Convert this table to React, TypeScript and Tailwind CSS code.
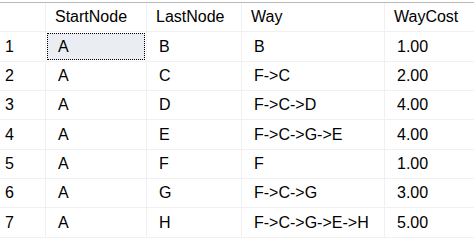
const columns = ['StartNode', 'LastNode', 'Way', 'WayCost'];

const rows = [
  ['A', 'B', 'B', '1.00'],
  ['A', 'C', 'F->C', '2.00'],
  ['A', 'D', 'F->C->D', '4.00'],
  ['A', 'E', 'F->C->G->E', '4.00'],
  ['A', 'F', 'F', '1.00'],
  ['A', 'G', 'F->C->G', '3.00'],
  ['A', 'H', 'F->C->G->E->H', '5.00'],
];

// alternating heights so the grid lines land where the screenshot has them
const rowHeights = ['h-[30px]', 'h-[29px]', 'h-[29px]', 'h-[30px]', 'h-[29px]', 'h-[29px]', 'h-[30px]'];

const colWidths = ['w-[46px]', 'w-[101px]', 'w-[95px]', 'w-[143px]', 'flex-1'];

export default function App() {
  return (
    <div
      className="w-[474px] h-[243px] bg-white text-black text-[16px] overflow-hidden"
      style={{ fontFamily: '"Liberation Sans", Arial, sans-serif' }}
    >
      <div className="h-[2px]" />
      <div className="border-t border-[#b9b9b9]">
        <div className="flex h-[29px] border-b border-[#f0f0f0]">
          <div className={`${colWidths[0]} border-r border-[#f0f0f0]`} />
          {columns.map((c, i) => (
            <div
              key={c}
              className={`${colWidths[i + 1]} ${i < 3 ? 'border-r border-[#f0f0f0]' : ''} flex items-center pl-[9px] leading-none`}
            >
              {c}
            </div>
          ))}
        </div>
        {rows.map((r, ri) => (
          <div key={ri} className={`flex ${rowHeights[ri]} border-b border-[#f0f0f0]`}>
            <div className={`${colWidths[0]} border-r border-[#f0f0f0] flex items-center pl-[5px]`}>
              {ri + 1}
            </div>
            {r.map((v, ci) => (
              <div
                key={ci}
                className={`${colWidths[ci + 1]} ${ci < 3 ? 'border-r border-[#f0f0f0]' : ''} flex items-center p-px`}
              >
                {ri === 0 && ci === 0 ? (
                  <div className="w-full h-full bg-[#eaeef3] border border-dotted border-black flex items-center pl-[10px]">
                    {v}
                  </div>
                ) : (
                  <span className="pl-[11px]">{v}</span>
                )}
              </div>
            ))}
          </div>
        ))}
      </div>
    </div>
  );
}
